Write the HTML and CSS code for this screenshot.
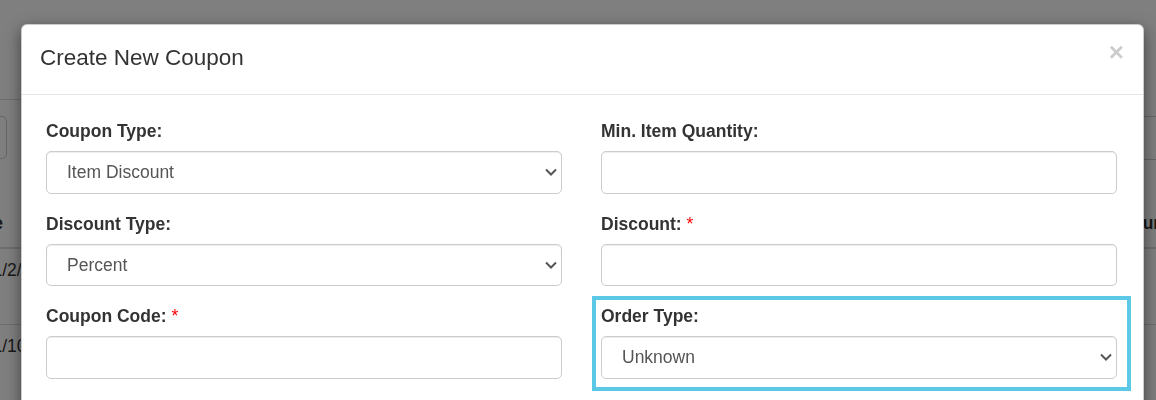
FILE: index.html
```html
<!DOCTYPE html>
<html>
<head>
 <meta charset="UTF-8">
 <title>Coupons</title>
 <link rel="stylesheet" href="styles.css">
</head>
<body>

<div class="page">
  <div class="page-top"></div>
  <div class="toolbar">
    <button type="button" class="tb-btn"></button>
    <div class="tb-search"></div>
  </div>
  <table class="list">
    <colgroup>
      <col class="w-date"><col class="w-mid"><col class="w-mid"><col class="w-mid2"><col class="w-last">
    </colgroup>
    <thead>
      <tr><th class="th-date">Date</th><th>Code</th><th>Type</th><th>Discount</th><th>Duration</th></tr>
    </thead>
    <tbody>
      <tr><td>11/2/2021</td><td>SAVE10</td><td>Item Discount</td><td>10%</td><td></td></tr>
      <tr><td>11/10/2021</td><td>FALL5</td><td>Order Discount</td><td>5%</td><td></td></tr>
    </tbody>
  </table>
</div>

<div class="backdrop"></div>

<div class="modal">
  <div class="modal-header">
    <h4 class="modal-title">Create New Coupon</h4>
    <button type="button" class="close">&times;</button>
  </div>
  <div class="modal-body">
    <div class="col">
      <div class="form-group">
        <label>Coupon Type:</label>
        <div class="select-wrap">
          <select class="form-control">
            <option>Item Discount</option>
            <option>Order Discount</option>
          </select>
          <svg class="caret" width="12" height="8" viewBox="0 0 12 8"><path d="M1 1.5 L6 6.5 L11 1.5" /></svg>
        </div>
      </div>
      <div class="form-group">
        <label>Discount Type:</label>
        <div class="select-wrap">
          <select class="form-control">
            <option>Percent</option>
            <option>Amount</option>
          </select>
          <svg class="caret" width="12" height="8" viewBox="0 0 12 8"><path d="M1 1.5 L6 6.5 L11 1.5" /></svg>
        </div>
      </div>
      <div class="form-group">
        <label>Coupon Code: <span class="req">*</span></label>
        <input type="text" class="form-control">
      </div>
    </div>
    <div class="col">
      <div class="form-group">
        <label>Min. Item Quantity:</label>
        <input type="text" class="form-control">
      </div>
      <div class="form-group">
        <label>Discount: <span class="req">*</span></label>
        <input type="text" class="form-control">
      </div>
      <div class="form-group marked">
        <label>Order Type:</label>
        <div class="select-wrap">
          <select class="form-control">
            <option>Unknown</option>
            <option>Dine In</option>
            <option>Take Out</option>
          </select>
          <svg class="caret" width="12" height="8" viewBox="0 0 12 8"><path d="M1 1.5 L6 6.5 L11 1.5" /></svg>
        </div>
      </div>
    </div>
  </div>
</div>

</body>
</html>
```

FILE: styles.css
```css
body {
  margin: 0;
  height: 400px;
  overflow: hidden;
  background: #fff;
  color: #333;
  font-family: "Liberation Sans", Arial, sans-serif;
  font-size: 17.5px;
}

/* page behind the dialog */
.page-top {
  width: 600px;
  height: 99px;
  border-bottom: 1px solid #ddd;
}
.toolbar {
  display: flex;
  justify-content: space-between;
  margin-top: 16px;
  height: 44px;
}
.tb-btn {
  margin-left: -40px;
  width: 47px;
  height: 43px;
  border: 1px solid #ccc;
  border-radius: 5px;
  background: #fff;
}
.tb-search {
  width: 400px;
  height: 44px;
  margin-right: -100px;
  box-sizing: border-box;
  border: 1px solid #ccc;
}
.list {
  margin: 40px 0 0 -26px;
  width: 1297px;
  table-layout: fixed;
  border-collapse: collapse;
}
.w-date { width: 150px; }
.w-mid { width: 333px; }
.w-mid2 { width: 330px; }
.w-last { width: 151px; }
.list th {
  padding: 11px 10px;
  line-height: 25px;
  text-align: left;
  border-bottom: 2px solid #ddd;
}
.list .th-date {
  text-indent: -19px;
}
.list td {
  padding: 9px 10px 41px;
  line-height: 25px;
  border-bottom: 1px solid #ddd;
  vertical-align: top;
}

.backdrop {
  position: fixed;
  top: 0;
  left: 0;
  right: 0;
  bottom: 0;
  background: rgba(0, 0, 0, .5);
}

/* dialog */
.modal {
  position: absolute;
  top: 24px;
  left: 21px;
  width: 1121px;
  height: 500px;
  background: #fff;
  border: 1px solid rgba(0, 0, 0, .2);
  border-radius: 6px;
  box-shadow: 0 5px 15px rgba(0, 0, 0, .5);
}
.modal-header {
  display: flex;
  justify-content: space-between;
  align-items: flex-start;
  padding: 17px 19px 20px 18px;
  border-bottom: 1px solid #e5e5e5;
}
.modal-title {
  margin: 0;
  font-size: 22.5px;
  font-weight: normal;
  line-height: 32px;
}
.close {
  margin-top: -3px;
  padding: 0;
  border: 0;
  background: none;
  font-family: "Liberation Sans", Arial, sans-serif;
  font-size: 26px;
  font-weight: bold;
  line-height: 1;
  color: #000;
  opacity: .2;
}
.modal-body {
  display: flex;
  gap: 39px;
  padding: 24px 26px 0 24px;
}
.col {
  flex: 1;
  display: flex;
  flex-direction: column;
  gap: 18px;
}
.form-group label {
  display: block;
  margin-bottom: 7px;
  font-weight: bold;
  line-height: 25px;
}
.req {
  color: #f00;
  font-weight: normal;
}
.form-control {
  display: block;
  width: 100%;
  height: 42.5px;
  box-sizing: border-box;
  padding: 0 19px;
  border: 1px solid #ccc;
  border-radius: 5px;
  background: #fff;
  color: #555;
  font-family: "Liberation Sans", Arial, sans-serif;
  font-size: 17.5px;
  box-shadow: inset 0 1px 1px rgba(0, 0, 0, .075);
}
select.form-control {
  appearance: none;
  -webkit-appearance: none;
  padding: 0 30px 0 20px;
}
.select-wrap {
  position: relative;
}
.caret {
  position: absolute;
  right: 5px;
  top: 50%;
  margin-top: -4px;
  pointer-events: none;
}
.caret path {
  fill: none;
  stroke: #555;
  stroke-width: 2;
}
.marked {
  position: relative;
}
.marked::after {
  content: "";
  position: absolute;
  top: -8px;
  left: -9px;
  right: -14px;
  bottom: -12px;
  border: 4px solid #5bc8e6;
}
```
